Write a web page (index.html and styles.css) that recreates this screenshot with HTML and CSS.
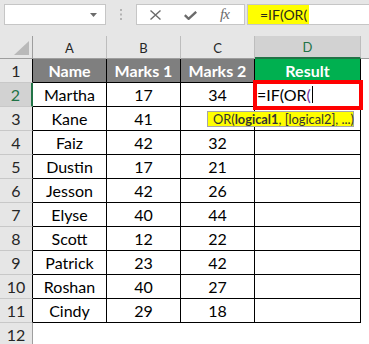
FILE: index.html
```html
<!DOCTYPE html>
<html>
<head>
<meta charset="utf-8">
<link rel="stylesheet" href="styles.css">
</head>
<body>
<div class="app">
  <div class="toolbar">
    <div class="namebox">
      <svg class="dd" width="7" height="4" viewBox="0 0 7 4"><path d="M0 0H7L3.5 4Z" fill="#6b6b6b"/></svg>
    </div>
    <div class="grip">
      <svg width="2" height="11" viewBox="0 0 2 11"><rect x="0" y="0" width="2" height="2" fill="#b3b3b3"/><rect x="0" y="4.5" width="2" height="2" fill="#b3b3b3"/><rect x="0" y="9" width="2" height="2" fill="#b3b3b3"/></svg>
    </div>
    <div class="fbtns">
      <svg class="ic-x" width="11" height="10" viewBox="0 0 11 10"><path d="M0.5 0.5L10.5 9.5M10.5 0.5L0.5 9.5" stroke="#6b6b6b" stroke-width="1.4" fill="none"/></svg>
      <svg class="ic-ok" width="13" height="9" viewBox="0 0 13 9"><path d="M0.8 4.2L4.6 7.8L12.2 0.8" stroke="#6b6b6b" stroke-width="2.4" fill="none"/></svg>
      <span class="fx">fx</span>
    </div>
    <div class="finput"><span class="fhl">=IF(OR(</span></div>
  </div>

  <div class="sheet">
    <div class="c corner"><svg width="15" height="14" viewBox="0 0 15 14"><path d="M15 0V14H0Z" fill="#b9b9b9"/></svg></div>
    <div class="c ch">A</div>
    <div class="c ch">B</div>
    <div class="c ch">C</div>
    <div class="c ch sel">D</div>
    <div class="c ch last"></div>

    <div class="c rh">1</div>
    <div class="c t hd">Name</div>
    <div class="c t hd">Marks 1</div>
    <div class="c t hd">Marks 2</div>
    <div class="c t hd green">Result</div>
    <div class="c"></div>

    <div class="c rh sel">2</div>
    <div class="c t">Martha</div>
    <div class="c t">17</div>
    <div class="c t">34</div>
    <div class="c t edit">=IF(OR<span class="paren">(</span><span class="caret"></span></div>
    <div class="c"></div>

    <div class="c rh">3</div>
    <div class="c t">Kane</div>
    <div class="c t">41</div>
    <div class="c t"></div>
    <div class="c t"></div>
    <div class="c"></div>

    <div class="c rh">4</div>
    <div class="c t">Faiz</div>
    <div class="c t">42</div>
    <div class="c t">32</div>
    <div class="c t"></div>
    <div class="c"></div>

    <div class="c rh">5</div>
    <div class="c t">Dustin</div>
    <div class="c t">17</div>
    <div class="c t">21</div>
    <div class="c t"></div>
    <div class="c"></div>

    <div class="c rh">6</div>
    <div class="c t">Jesson</div>
    <div class="c t">42</div>
    <div class="c t">26</div>
    <div class="c t"></div>
    <div class="c"></div>

    <div class="c rh">7</div>
    <div class="c t">Elyse</div>
    <div class="c t">40</div>
    <div class="c t">44</div>
    <div class="c t"></div>
    <div class="c"></div>

    <div class="c rh">8</div>
    <div class="c t">Scott</div>
    <div class="c t">12</div>
    <div class="c t">22</div>
    <div class="c t"></div>
    <div class="c"></div>

    <div class="c rh">9</div>
    <div class="c t">Patrick</div>
    <div class="c t">23</div>
    <div class="c t">42</div>
    <div class="c t"></div>
    <div class="c"></div>

    <div class="c rh">10</div>
    <div class="c t">Roshan</div>
    <div class="c t">40</div>
    <div class="c t">27</div>
    <div class="c t"></div>
    <div class="c"></div>

    <div class="c rh">11</div>
    <div class="c t">Cindy</div>
    <div class="c t">29</div>
    <div class="c t">18</div>
    <div class="c t"></div>
    <div class="c"></div>

    <div class="c rh plain">12</div>
    <div class="c"></div>
    <div class="c"></div>
    <div class="c"></div>
    <div class="c"></div>
    <div class="c"></div>
  </div>

  <div class="selbox"></div>
  <div class="tip">OR(<b>logical1</b>, [logical2], ...)</div>
</div>
</body>
</html>
```

FILE: styles.css
```css
* { box-sizing: border-box; }
body { margin: 0; background: #fff; font-family: Lato, "Liberation Sans", sans-serif; }
.app { position: relative; width: 369px; height: 344px; overflow: hidden; }

.toolbar { height: 36px; background: #e6e6e6; display: flex; align-items: flex-start; padding: 4px 0 0 4px; }
.namebox { width: 102px; height: 21px; background: #fff; border: 1px solid #c6c6c6; display: flex; justify-content: flex-end; align-items: center; padding-right: 8px; }
.grip { width: 30px; height: 21px; display: flex; justify-content: center; align-items: center; }
.fbtns { width: 109px; height: 21px; background: #fff; border: 1px solid #c6c6c6; display: flex; align-items: center; padding-left: 13px; }
.ic-x { margin-top: 1px; }
.ic-ok { margin-left: 23px; margin-top: 2px; }
.fx { margin-left: 23px; font-family: "Liberation Serif", serif; font-style: italic; font-size: 15px; color: #6b6b6b; letter-spacing: -1px; line-height: 19px; }
.finput { margin-left: 2px; flex: 1; height: 21px; background: #fff; border: 1px solid #c6c6c6; border-right: none; }
.fhl { display: block; width: 61px; height: 19px; background: #ffff00; padding-left: 12px; line-height: 19px; font-size: 14px; color: #2a2a1a; }

.sheet { display: grid; grid-template-columns: 33px 74px 74px 74px 106px 8px; grid-template-rows: 23px repeat(12, 24px); }
.c { display: flex; align-items: center; justify-content: center; font-size: 16px; color: #000; border-right: 1px solid transparent; border-bottom: 1px solid transparent; white-space: nowrap; }
.corner { background: #e6e6e6; border-right: 1px solid #9e9e9e; border-bottom: 1px solid #9e9e9e; justify-content: flex-end; align-items: flex-end; padding: 0 3px 3px 0; }
.ch { background: #e6e6e6; border-right: 1px solid #bdbdbd; border-bottom: 1px solid #9e9e9e; font-size: 13px; color: #262626; padding-top: 1px; }
.ch.sel { background: #d2d2d2; border-bottom: 2px solid #217346; color: #217346; }
.ch.last { border-right: none; }
.rh { background: #e6e6e6; border-right: 1px solid #000; border-bottom: 1px solid #c8c8c8; color: #262626; }
.rh.sel { background: #d2d2d2; color: #217346; border-right: 2px solid #217346; }
.rh.plain { border-right: 1px solid #9e9e9e; }
.t { border-right: 1px solid #000; border-bottom: 1px solid #000; }
.hd { background: #7f7f7f; color: #fff; font-weight: 700; }
.hd.green { background: #00b050; }
.edit { justify-content: flex-start; padding-left: 2px; }
.paren { color: #7030a0; }
.caret { display: inline-block; width: 1px; height: 17px; background: #000; margin-left: 1px; }

.selbox { position: absolute; left: 253px; top: 80px; width: 110px; height: 30px; border: 4px solid #ff0000; }
.tip { position: absolute; left: 207px; top: 111px; width: 147px; height: 16px; background: #ffff00; border: 1px solid #a6a6a6; font-size: 12.8px; line-height: 14px; padding-left: 5px; color: #333; white-space: nowrap; }
.tip b { font-weight: 700; }
```
